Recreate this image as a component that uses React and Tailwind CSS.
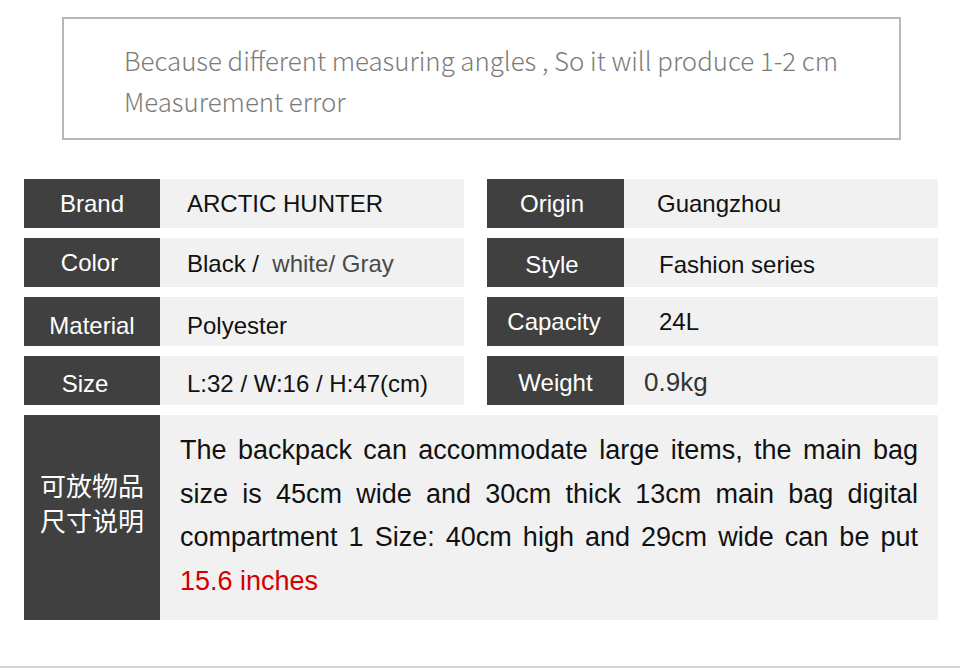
import React from 'react'

const sans = { fontFamily: '"Liberation Sans", Arial, sans-serif' }

const leftRows = [
    { label: 'Brand', value: 'ARCTIC HUNTER', lift: '' },
    { label: 'Color', value: 'color', lift: 'pt-[3px]', labelLift: 'pr-[5px]' },
    { label: 'Material', value: 'Polyester', lift: 'pt-[8px]', labelLift: 'pt-[8px]' },
    { label: 'Size', value: 'L:32 / W:16 / H:47(cm)', lift: 'pt-[6px]', labelLift: 'pt-[6px] pr-[14px]' },
]

const rightRows = [
    { label: 'Origin', value: 'Guangzhou', pad: 'pl-[33px]', labelLift: 'pr-[7px]' },
    { label: 'Style', value: 'Fashion series', pad: 'pl-[35px]', lift: 'pt-[4px]', labelLift: 'pt-[4px] pr-[7px]' },
    { label: 'Capacity', value: '24L', pad: 'pl-[35px]', labelLift: 'pr-[3px]' },
    { label: 'Weight', value: '0.9kg', pad: 'pl-[20px]', lift: 'pt-[4px]', labelLift: 'pt-[4px]' },
]

function Row({ row, labelW, valueW, pad }) {
    return (
        <div className='flex h-[49px]'>
            <div className={`${labelW} shrink-0 bg-[#404040] text-white text-[24px] flex items-center justify-center ${row.labelLift || ''}`}>
                {row.label}
            </div>
            <div className={`${valueW} bg-[#f1f1f1] flex items-center ${pad} ${row.lift || ''}`}>
                {row.value === 'color' ? (
                    <span className='text-[24px] text-[#111]'>
                        Black /&nbsp; <span className='text-[#4a4a4a]'>white/ Gray</span>
                    </span>
                ) : row.value === '0.9kg' ? (
                    <span className='text-[26px] text-[#333]'>{row.value}</span>
                ) : (
                    <span className='text-[24px] text-[#111]'>{row.value}</span>
                )}
            </div>
        </div>
    )
}

function App() {
    return (
        <div className='w-[960px] h-[668px] bg-white overflow-hidden flex flex-col' style={sans}>

            {/* Notice box */}
            <div
                className='mt-[17px] ml-[62px] w-[839px] h-[123px] border-2 border-[#b8b8b8] pt-[20px] pl-[60px] text-[25.8px] leading-[41px] font-light text-[#7b7b7b]'
                style={{ fontFamily: '"Noto Sans CJK SC", "Noto Sans", sans-serif' }}
            >
                <div>Because different measuring angles , So it will produce 1-2 cm</div>
                <div>Measurement error</div>
            </div>

            {/* Spec table */}
            <div className='mt-[39px] ml-[24px] flex gap-[23px]'>
                <div className='flex flex-col gap-[10px]'>
                    {leftRows.map((row) => (
                        <Row key={row.label} row={row} labelW='w-[136px]' valueW='w-[304px]' pad='pl-[27px]' />
                    ))}
                </div>
                <div className='flex flex-col gap-[10px]'>
                    {rightRows.map((row) => (
                        <Row key={row.label} row={row} labelW='w-[137px]' valueW='w-[314px]' pad={row.pad} />
                    ))}
                </div>
            </div>

            {/* Capacity notes */}
            <div className='mt-[10px] ml-[24px] w-[914px] h-[205px] flex'>
                <div
                    className='w-[136px] shrink-0 bg-[#404040] text-white text-[26px] leading-[35px] text-center pt-[52px]'
                    style={{ fontFamily: '"Noto Sans CJK SC", sans-serif' }}
                >
                    <div>可放物品</div>
                    <div>尺寸说明</div>
                </div>
                <div className='flex-1 bg-[#f1f1f1] pl-[20px] pr-[20px] pt-[14px] text-[27px] leading-[43.5px] text-[#111]'>
                    <div className='whitespace-nowrap text-justify [text-align-last:justify]'>The backpack can accommodate large items, the main bag</div>
                    <div className='whitespace-nowrap text-justify [text-align-last:justify]'>size is 45cm wide and 30cm thick 13cm main bag digital</div>
                    <div className='whitespace-nowrap text-justify [text-align-last:justify]'>compartment 1 Size: 40cm high and 29cm wide can be put</div>
                    <div className='text-[#d40000]'>15.6 inches</div>
                </div>
            </div>

            <div className='mt-auto h-[2px] bg-[#d6d6d6]' />
        </div>
    )
}

export default App
